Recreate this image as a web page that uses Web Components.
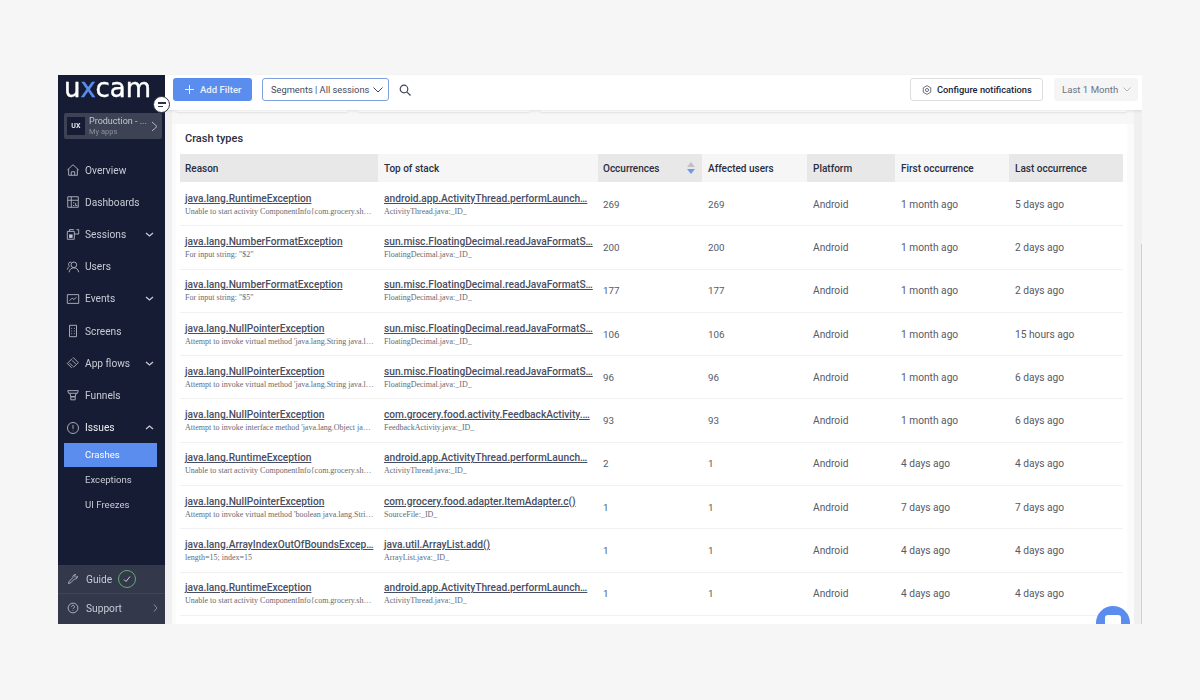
<!DOCTYPE html>
<html lang="en">
<head>
<meta charset="utf-8">
<title>Crash types</title>
<style>
	html, body { margin: 0; height: 100%; background: #f6f6f6; }
	body { padding: 75px 58px 76px; box-sizing: border-box; font-family: Roboto, "Liberation Sans", sans-serif; }
</style>
</head>
<body>
<ux-app>
	<ux-sidebar slot="side">
		<ux-nav-item label="Overview"><svg slot="icon" viewBox="0 0 16 16"><path d="M1.5 8 8 2l6.5 6M3 7v7h10V7M6 14v-4h4v4"/></svg></ux-nav-item>
		<ux-nav-item label="Dashboards"><svg slot="icon" viewBox="0 0 16 16"><path d="M2 2h12v12H2zM2 6h12M6 2v12M8 9h1.5M8 12h1.5M11 9v3h2"/></svg></ux-nav-item>
		<ux-nav-item label="Sessions" chevron="down"><svg slot="icon" viewBox="0 0 16 16"><path d="M1.5 5h8v9h-8zM4 5V3h5M12 3h2.500v5H12M9.500 8H12"/><rect x="4" y="9" width="3" height="3" fill="currentColor"/></svg></ux-nav-item>
		<ux-nav-item label="Users"><svg slot="icon" viewBox="0 0 16 16"><circle cx="9" cy="5.500" r="3.200"/><path d="M3.500 14c.6-3.500 2.600-5 5.500-5s4.900 1.500 5.500 5M6 2.500C4 2 2.500 3.500 3 5.500c.2.800.6 1.300 1 1.600C2.800 8 2 9.300 1.500 11"/></svg></ux-nav-item>
		<ux-nav-item label="Events" chevron="down"><svg slot="icon" viewBox="0 0 16 16"><path d="M1.500 3h13v10h-13zM4 10l3-3 2 1.500L12 6"/></svg></ux-nav-item>
		<ux-nav-item label="Screens"><svg slot="icon" viewBox="0 0 16 16"><path d="M4 1.500h8v13H4zM6 5h1M9 5h1M6 8h1M9 8h1M6 11h1M9 11h1"/></svg></ux-nav-item>
		<ux-nav-item label="App flows" chevron="down"><svg slot="icon" viewBox="0 0 16 16"><path d="M8 1.500l6 6-5.500 5.500M6.500 13.500 1.500 8.500 7 3M4 8l4 4M7 5l4 4"/></svg></ux-nav-item>
		<ux-nav-item label="Funnels"><svg slot="icon" viewBox="0 0 16 16"><path d="M2 3h12l-1 3H3zM4.500 6l1 4h5l1-4M5.500 10h5v3.500h-5z"/></svg></ux-nav-item>
		<ux-nav-item label="Issues" chevron="up" strong><svg slot="icon" viewBox="0 0 16 16"><circle cx="8" cy="8" r="6.300"/><path d="M8 4.500v4.500M8 11v.6"/></svg></ux-nav-item>
		<ux-sub-item active>Crashes</ux-sub-item>
		<ux-sub-item>Exceptions</ux-sub-item>
		<ux-sub-item>UI Freezes</ux-sub-item>
	</ux-sidebar>
	<ux-topbar slot="top"></ux-topbar>
	<crash-card></crash-card>
</ux-app>

<script>
// shared cell text style for the table
const SANS = 'Roboto, "Liberation Sans", sans-serif';

class UxApp extends HTMLElement {
	constructor() {
		super();
		this.attachShadow({ mode: 'open' }).innerHTML = `
			<style>
				:host { display: flex; width: 1084px; height: 553px; margin-top: -4px; padding-top: 4px; box-sizing: border-box; overflow: hidden; position: relative;
					background: #f0f0f1; background-clip: content-box; opacity: .999; filter: blur(.35px); }
				.main { flex: 1; min-width: 0; display: flex; flex-direction: column; }
				.body { flex: 1; min-height: 0; display: flex; padding-left: 7px; }
				.panel { flex: 1; min-width: 0; display: flex; flex-direction: column; background: #fbfbfb; padding: 0 7px 0 4px; box-sizing: border-box; }
				.strip { height: 14px; flex: none; display: flex; gap: 10px; margin: 0 -7px 0 -4px; padding: 0 7px 0 4px; background: #f7f7f8; }
				.strip i { display: block; height: 2px; background: #fff; border-radius: 0 0 6px 6px; box-shadow: 0 1px 2px rgba(0,0,0,.08); }
				.strip i:nth-child(1) { width: 172px; }
				.strip i:nth-child(2) { width: 172px; }
				.strip i:nth-child(3) { flex: 1; }
				.gutter { width: 8px; flex: none; display: flex; flex-direction: column; }
				.gutter::after { content: ""; flex: 1; margin: 134px 0 0 7px; background: #cfd0d2; }
				.chat { position: absolute; left: 1038px; top: 535px; width: 34px; height: 34px; border-radius: 50%; background: #5b8def; }
				.chat::after { content: ""; position: absolute; left: 9px; top: 9px; width: 16px; height: 16px; border-radius: 3px; background: #fff; }
			</style>
			<slot name="side"></slot>
			<div class="main">
				<slot name="top"></slot>
				<div class="body">
					<div class="panel">
						<div class="strip"><i></i><i></i><i></i></div>
						<slot></slot>
					</div>
					<div class="gutter"></div>
				</div>
			</div>
			<div class="chat"></div>
		`;
	}
}

class UxSidebar extends HTMLElement {
	constructor() {
		super();
		this.attachShadow({ mode: 'open' }).innerHTML = `
			<style>
				:host { display: flex; flex-direction: column; flex: none; width: 107px; height: 100%; position: relative; z-index: 2;
					background: #161c33; color: #c9ccd6; font-family: ${SANS}; }
				.logo { height: 38px; flex: none; padding-left: 6px; font: 400 26px/26px "DejaVu Sans", sans-serif;
					color: #fff; box-sizing: border-box; -webkit-text-stroke: .4px #fff; }
				.logo b { font-weight: 400; color: #5b8def; -webkit-text-stroke: .4px #5b8def; }
				.toggle { position: absolute; left: 95px; top: 21px; width: 17px; height: 17px; border-radius: 50%; background: #fff;
					border: 1px solid #2b3045; display: flex; flex-direction: column; justify-content: center; gap: 2px; padding-left: 4px; box-sizing: border-box; }
				.toggle i { display: block; height: 1.500px; background: #2b3045; width: 8px; }
				.toggle i + i { width: 5px; }
				.pill { flex: none; height: 26px; margin: 0 3px 15px 6px; background: #3d4254; border-radius: 2px; display: flex; align-items: center; padding: 0 4px 0 3px; box-sizing: border-box; }
				.ux { width: 18px; height: 18px; background: #161c33; color: #e6e7eb; font-size: 7px; font-weight: 700; display: flex; align-items: center; justify-content: center; flex: none; letter-spacing: .3px; }
				.app { margin-left: 4px; padding-top: 1px; flex: 1; min-width: 0; line-height: 9.500px; }
				.app div { font-size: 9px; color: #c4c7d0; white-space: nowrap; }
				.app div + div { font-size: 7.500px; color: #8b8f9e; }
				.pill svg { width: 7px; height: 11px; fill: none; stroke: #b5b8c2; stroke-width: 1; flex: none; }
				.nav { flex: 1; min-height: 0; }
				.foot { flex: none; background: #33384b; font-size: 10.200px; }
				.row { display: flex; align-items: center; padding-left: 9px; height: 28px; box-sizing: border-box; }
				.row + .row { height: 31px; padding-bottom: 2px; border-top: 1px solid #3f4457; }
				.row svg.ic { width: 12px; height: 12px; fill: none; stroke: #c3c6d0; stroke-width: 1.100; flex: none; }
				.row span { margin-left: 7px; }
				.ok { width: 18px; height: 18px; margin-left: 6px; border: 1px solid #5fae6c; border-radius: 50%; box-sizing: border-box; display: flex; align-items: center; justify-content: center; }
				.ok svg { width: 8px; height: 8px; fill: none; stroke: #cfd2da; stroke-width: 1; }
				.more { margin-left: auto; margin-right: 7px; width: 5px; height: 8px; fill: none; stroke: #8b8f9e; stroke-width: 1; }
			</style>
			<div class="logo">u<b>x</b>cam</div>
			<div class="toggle"><i></i><i></i></div>
			<div class="pill">
				<div class="ux">UX</div>
				<div class="app"><div>Production - ...</div><div>My apps</div></div>
				<svg viewBox="0 0 7 11"><path d="M1 1l5 4.500L1 10"/></svg>
			</div>
			<div class="nav"><slot></slot></div>
			<div class="foot">
				<div class="row">
					<svg class="ic" viewBox="0 0 16 16"><path d="M2 14l1-3 5-5c-.5-2 .8-4 3.500-4l-1.500 2 2 2 2-1.500c0 2.700-2 4-4 3.500l-5 5z"/></svg>
					<span>Guide</span>
					<div class="ok"><svg viewBox="0 0 8 8"><path d="M1 4.500l2 2 4-5"/></svg></div>
				</div>
				<div class="row">
					<svg class="ic" viewBox="0 0 16 16"><circle cx="8" cy="8" r="6.500"/><path d="M6 6.300C6 5 7 4.500 8 4.500s2 .7 2 1.800c0 1.600-2 1.700-2 3.200M8 11v.8"/></svg>
					<span>Support</span>
					<svg class="more" viewBox="0 0 5 8"><path d="M1 .5l3 3.500-3 3.500"/></svg>
				</div>
			</div>
		`;
	}
}

class UxNavItem extends HTMLElement {
	constructor() {
		super();
		const label = this.getAttribute('label');
		const chevron = this.getAttribute('chevron');
		const path = chevron === 'up' ? 'M1 5l3.500-3L8 5' : 'M1 2l3.500 3L8 2';
		this.attachShadow({ mode: 'open' }).innerHTML = `
			<style>
				:host { display: flex; align-items: center; height: 32.200px; padding-left: 8px; box-sizing: border-box; font-size: 10.200px; color: #c9ccd6; }
				:host([strong]) { color: #eceef3; }
				.ic { width: 14px; height: 14px; flex: none; display: flex; }
				::slotted(svg) { width: 14px; height: 14px; fill: none; stroke: #b9bcc8; stroke-width: 1; }
				span { margin-left: 5px; white-space: nowrap; }
				svg.ch { margin-left: auto; margin-right: 11px; width: 9px; height: 7px; fill: none; stroke: #c9ccd6; stroke-width: 1.300; }
			</style>
			<div class="ic"><slot name="icon"></slot></div>
			<span>${label}</span>
			${chevron ? `<svg class="ch" viewBox="0 0 9 7"><path d="${path}"/></svg>` : ''}
		`;
	}
}

class UxSubItem extends HTMLElement {
	constructor() {
		super();
		this.attachShadow({ mode: 'open' }).innerHTML = `
			<style>
				:host { display: flex; align-items: center; height: 25px; margin: 0 8px 0 6px; padding-left: 21px; box-sizing: border-box; font-size: 9.600px; color: #c9ccd6; }
				:host([active]) { background: #5b8def; color: #fff; height: 24.500px; margin-top: -1px; }
			</style>
			<slot></slot>
		`;
	}
}

class UxTopbar extends HTMLElement {
	constructor() {
		super();
		this.attachShadow({ mode: 'open' }).innerHTML = `
			<style>
				:host { display: flex; align-items: center; flex: none; height: 35px; padding: 0 4px 6px 8px; box-sizing: border-box; background: #fff;
					box-shadow: 0 1px 3px rgba(0,0,0,.1); font-family: ${SANS}; font-size: 9.600px; position: relative; z-index: 1; }
				.btn { height: 23px; display: flex; align-items: center; box-sizing: border-box; border-radius: 3px; white-space: nowrap; }
				.add { width: 79px; background: #5b8def; color: #e9f0fd; font-weight: 500; padding-left: 12px; gap: 6px; }
				.add svg { width: 9px; height: 9px; stroke: #e9f0fd; stroke-width: 1; }
				.seg { width: 127px; margin-left: 10px; border: 1px solid #7f9fde; color: #45495e; font-size: 9.300px; padding-left: 8px; gap: 4px; }
				.seg svg { width: 10px; height: 6px; fill: none; stroke: #40445a; stroke-width: 1; flex: none; }
				.search { width: 12px; height: 12px; margin-left: 10px; fill: none; stroke: #40445a; stroke-width: 1.200; }
				.conf { width: 133px; margin-left: auto; border: 1px solid #dcdde0; color: #20243a; font-weight: 500; font-size: 9.300px; padding-left: 11px; gap: 5px; }
				.conf svg { width: 10px; height: 10px; fill: none; stroke: #30344a; stroke-width: 1.100; }
				.last { width: 84px; margin-left: 11px; background: #f5f5f6; color: #6f7280; padding-left: 8px; gap: 5px; }
				.last svg { width: 8px; height: 5px; fill: none; stroke: #b4b6bd; stroke-width: 1; }
			</style>
			<div class="btn add"><svg viewBox="0 0 9 9"><path d="M4.500 0v9M0 4.500h9"/></svg>Add Filter</div>
			<div class="btn seg">Segments | All sessions<svg viewBox="0 0 10 6"><path d="M.5.5 5 5 9.500.5"/></svg></div>
			<svg class="search" viewBox="0 0 12 12"><circle cx="5" cy="5" r="3.800"/><path d="M7.800 7.800 11.500 11.500"/></svg>
			<div class="btn conf"><svg viewBox="0 0 16 16"><path d="M8 1l6 3.500v7L8 15l-6-3.500v-7z"/><circle cx="8" cy="8" r="2.500"/></svg>Configure notifications</div>
			<div class="btn last">Last 1 Month<svg viewBox="0 0 8 5"><path d="M.5.5 4 4 7.500.5"/></svg></div>
		`;
	}
}

const COLS = '198px 220px 104px 105px 88px 114px 114px';

class CrashRow extends HTMLElement {
	set data(d) {
		const shadow = this.shadowRoot || this.attachShadow({ mode: 'open' });
		shadow.innerHTML = `
			<style>
				:host { display: grid; grid-template-columns: ${COLS}; height: 43.300px; box-sizing: border-box; border-bottom: 1px solid #f1f1f2; align-items: center;
					font-family: ${SANS}; font-size: 10.200px; color: #565a69; }
				.c { padding-left: 5px; min-width: 0; }
				.c.t { padding-left: 5px; }
				.c.p { padding-left: 6px; }
				.c.n { font-size: 9.800px; }
				a { display: block; color: #4a4e63; font-weight: 500; font-size: 10.200px; line-height: 13px; text-decoration: underline; white-space: nowrap; }
				small { display: block; margin-top: 2px; font: 8px/10px "Liberation Serif", serif; color: #666a74; white-space: nowrap; }
			</style>
			<div class="c t"><a>${d.reason}</a><small>${d.detail}</small></div>
			<div class="c t p"><a>${d.stack}</a><small>${d.file}</small></div>
			<div class="c n">${d.occ}</div>
			<div class="c n p">${d.users}</div>
			<div class="c p">Android</div>
			<div class="c p">${d.first}</div>
			<div class="c p">${d.last}</div>
		`;
	}
}

const START = 'Unable to start activity ComponentInfo{com.grocery.sh…';
const STRING = "Attempt to invoke virtual method 'java.lang.String java.l…";
const LAUNCH = 'android.app.ActivityThread.performLaunch…';
const FLOAT = 'sun.misc.FloatingDecimal.readJavaFormatS…';
const RUNTIME = 'java.lang.RuntimeException';
const NFE = 'java.lang.NumberFormatException';
const NPE = 'java.lang.NullPointerException';
const AT = 'ActivityThread.java:_ID_';
const FD = 'FloatingDecimal.java:_ID_';

const ROWS = [
	{ reason: RUNTIME, detail: START, stack: LAUNCH, file: AT, occ: 269, users: 269, first: '1 month ago', last: '5 days ago' },
	{ reason: NFE, detail: 'For input string: "$2"', stack: FLOAT, file: FD, occ: 200, users: 200, first: '1 month ago', last: '2 days ago' },
	{ reason: NFE, detail: 'For input string: "$5"', stack: FLOAT, file: FD, occ: 177, users: 177, first: '1 month ago', last: '2 days ago' },
	{ reason: NPE, detail: STRING, stack: FLOAT, file: FD, occ: 106, users: 106, first: '1 month ago', last: '15 hours ago' },
	{ reason: NPE, detail: STRING, stack: FLOAT, file: FD, occ: 96, users: 96, first: '1 month ago', last: '6 days ago' },
	{ reason: NPE, detail: "Attempt to invoke interface method 'java.lang.Object ja…", stack: 'com.grocery.food.activity.FeedbackActivity.…', file: 'FeedbackActivity.java:_ID_', occ: 93, users: 93, first: '1 month ago', last: '6 days ago' },
	{ reason: RUNTIME, detail: START, stack: LAUNCH, file: AT, occ: 2, users: 1, first: '4 days ago', last: '4 days ago' },
	{ reason: NPE, detail: "Attempt to invoke virtual method 'boolean java.lang.Stri…", stack: 'com.grocery.food.adapter.ItemAdapter.c()', file: 'SourceFile:_ID_', occ: 1, users: 1, first: '7 days ago', last: '7 days ago' },
	{ reason: 'java.lang.ArrayIndexOutOfBoundsExcep…', detail: 'length=15; index=15', stack: 'java.util.ArrayList.add()', file: 'ArrayList.java:_ID_', occ: 1, users: 1, first: '4 days ago', last: '4 days ago' },
	{ reason: RUNTIME, detail: START, stack: LAUNCH, file: AT, occ: 1, users: 1, first: '4 days ago', last: '4 days ago' }
];

class CrashCard extends HTMLElement {
	constructor() {
		super();
		this.attachShadow({ mode: 'open' }).innerHTML = `
			<style>
				:host { display: block; flex: 1; min-height: 0; overflow: hidden; background: #fff; padding: 0 4px; box-sizing: border-box; font-family: ${SANS}; }
				h2 { margin: 0; height: 30px; display: flex; align-items: center; padding: 0 0 2px 5px; box-sizing: border-box; font-size: 11px; font-weight: 500; color: #2a2e40; }
				.head { display: grid; grid-template-columns: ${COLS}; height: 28px; align-items: stretch; font-size: 10px; font-weight: 500; color: #2a2e40; }
				.head div { display: flex; align-items: center; padding-left: 5px; background: #f6f6f7; }
				.head div:nth-child(odd) { background: #e8e8e9; }
				.head div.p { padding-left: 6px; }
				.sort { position: relative; width: 8px; height: 12px; margin-left: auto; margin-right: 7px; }
				.sort::before, .sort::after { content: ""; position: absolute; left: 0; border: 4px solid transparent; }
				.sort::before { top: 0; border-bottom: 5px solid #bfc1c6; border-top: 0; }
				.sort::after { bottom: 0; border-top: 5px solid #6f97e8; border-bottom: 0; }
				#rows { padding-top: 1px; }
			</style>
			<h2>Crash types</h2>
			<div class="head">
				<div>Reason</div>
				<div class="p">Top of stack</div>
				<div>Occurrences<span class="sort"></span></div>
				<div class="p">Affected users</div>
				<div class="p">Platform</div>
				<div class="p">First occurrence</div>
				<div class="p">Last occurrence</div>
			</div>
			<div id="rows"></div>
		`;
		const rows = this.shadowRoot.getElementById('rows');
		ROWS.forEach(d => {
			const row = document.createElement('crash-row');
			row.data = d;
			rows.append(row);
		});
	}
}

customElements.define('ux-app', UxApp);
customElements.define('ux-sidebar', UxSidebar);
customElements.define('ux-nav-item', UxNavItem);
customElements.define('ux-sub-item', UxSubItem);
customElements.define('ux-topbar', UxTopbar);
customElements.define('crash-row', CrashRow);
customElements.define('crash-card', CrashCard);
</script>
</body>
</html>
